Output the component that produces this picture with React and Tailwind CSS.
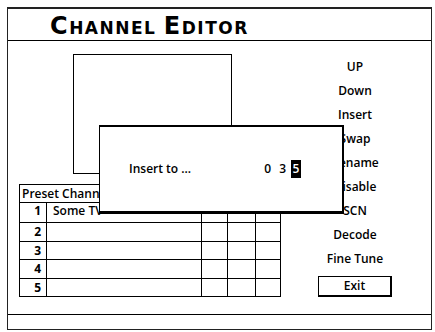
export default function App() {
  const menu = ["UP", "Down", "Insert", "Swap", "Rename", "Disable", "SCN", "Decode", "Fine Tune"];
  const rows = [
    { n: "1", name: "Some TV", h: "h-[20px]" },
    { n: "2", name: "", h: "h-[19px]" },
    { n: "3", name: "", h: "h-[18px]" },
    { n: "4", name: "", h: "h-[19px]" },
    { n: "5", name: "", h: "h-[18px]" },
  ];
  return (
    <div className="w-[435px] h-[332px] bg-white pt-[7px] pl-[7px] text-black" style={{ fontFamily: '"Open Sans", sans-serif' }}>
      <div className="w-[425px] h-[323px] border-l border-r border-b border-t-2 border-[#222] flex flex-col">
        {/* header */}
        <div className="h-[32px] border-b-[1.5px] border-black flex items-end pl-[42px] pb-[2px]">
          <div className="leading-none tracking-[1.5px] font-bold" style={{ fontFamily: '"DejaVu Sans", sans-serif' }}>
            <span className="text-[24px]">C</span>
            <span className="text-[17px]">HANNEL </span>
            <span className="text-[24px]">E</span>
            <span className="text-[17px]">DITOR</span>
          </div>
        </div>
        {/* content */}
        <div className="flex-1 relative flex">
          <div className="w-[282px] flex flex-col">
            <div className="ml-[65px] mt-[13px] w-[159px] h-[120px] border border-black"></div>
            <div className="ml-[11px] mt-[10px] w-[262px] border-t-[1.5px] border-l border-r border-black text-[12px] font-semibold">
              <div className="h-[18px] border-b-[1.5px] border-black flex items-center pl-[2px] leading-none whitespace-nowrap overflow-hidden">
                Preset Channel List
              </div>
              {rows.map((r, i) => (
                <div key={r.n} className={`${r.h} border-b-[1.5px] border-black flex leading-none`}>
                  <div className={`w-[27px] border-r border-black flex justify-end pr-[5px] font-bold ${i === 0 ? "items-start pt-[2px]" : "items-center"}`}>{r.n}</div>
                  <div className={`w-[155px] border-r border-black flex pl-[6px] whitespace-nowrap overflow-hidden ${i === 0 ? "items-start pt-[2px]" : "items-center"}`}>{r.name}</div>
                  <div className="w-[26px] border-r border-black"></div>
                  <div className="w-[28px] border-r border-black"></div>
                  <div className="flex-1"></div>
                </div>
              ))}
            </div>
          </div>
          <div className="w-[130px] flex flex-col items-center pt-[14px] text-[12px] font-semibold">
            {menu.map((m) => (
              <div key={m} className="h-[24px] leading-[24px]">{m}</div>
            ))}
            <div className="mt-[5px] w-[74px] h-[21px] border border-r-2 border-b-2 border-black flex items-center justify-center leading-none">
              Exit
            </div>
          </div>
          {/* dialog */}
          <div className="absolute left-[91px] top-[84px] w-[245px] h-[89px] bg-white border-l border-t-2 border-r-2 border-b-[3px] border-black flex items-center pl-[29px] pr-[41px] text-[12px] font-semibold">
            <span className="leading-none">Insert to ...</span>
            <div className="ml-auto flex items-center leading-none">
              <span>0</span>
              <span className="ml-[8px]">3</span>
              <span className="ml-[5px] w-[10px] h-[18px] bg-black text-white flex items-center justify-center">5</span>
            </div>
          </div>
        </div>
        {/* footer */}
        <div className="h-[15px] border-t border-black"></div>
      </div>
    </div>
  );
}
